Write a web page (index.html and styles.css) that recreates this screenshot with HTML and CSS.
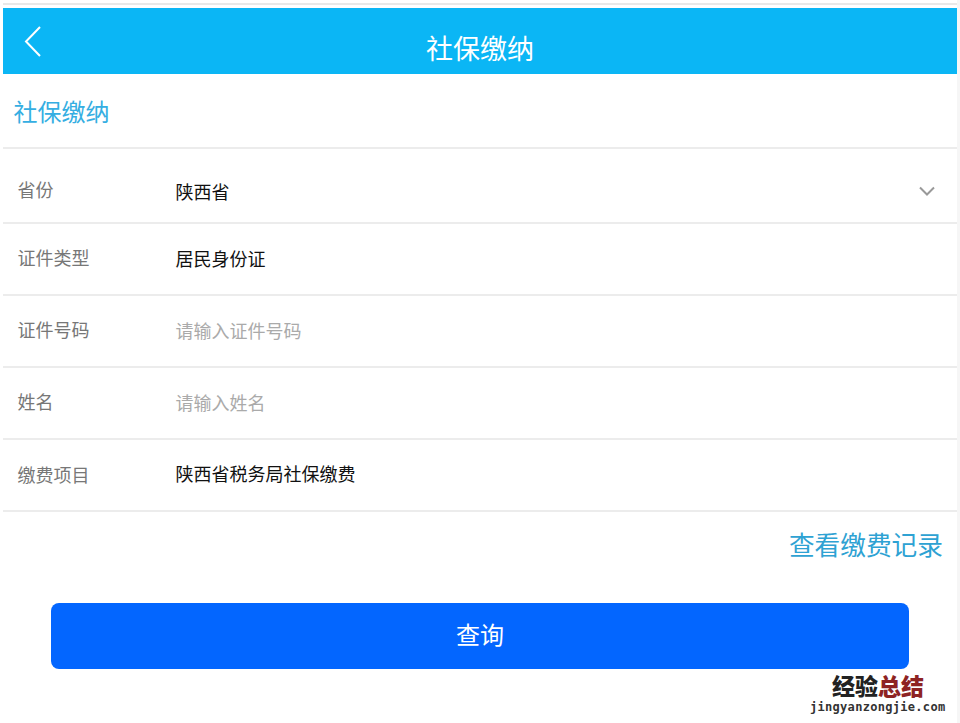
FILE: index.html
```html
<!DOCTYPE html>
<html lang="zh-CN">
<head>
<meta charset="utf-8">
<title>社保缴纳</title>
<link rel="stylesheet" href="styles.css">
</head>
<body>
<div class="page">
  <div class="topline"></div>
  <header class="header">
    <svg class="back" width="18" height="32" viewBox="0 0 18 32"><path d="M16 2 L2 16.5 L16 31" fill="none" stroke="#fff" stroke-width="2"/></svg>
    <h1 class="header-title">社保缴纳</h1>
  </header>
  <h2 class="section">社保缴纳</h2>
  <div class="form">
    <div class="row row-first">
      <span class="label label-up">省份</span>
      <span class="value">陕西省</span>
      <svg class="chev" width="16" height="10" viewBox="0 0 16 10"><path d="M1 1.5 L8 8.5 L15 1.5" fill="none" stroke="#999" stroke-width="2"/></svg>
    </div>
    <div class="row"><span class="label">证件类型</span><span class="value">居民身份证</span></div>
    <div class="row"><span class="label">证件号码</span><span class="value hint">请输入证件号码</span></div>
    <div class="row"><span class="label">姓名</span><span class="value hint">请输入姓名</span></div>
    <div class="row"><span class="label label-down">缴费项目</span><span class="value value-up">陕西省税务局社保缴费</span></div>
  </div>
  <div class="record"><a class="record-link">查看缴费记录</a></div>
  <div class="action"><button class="query">查询</button></div>
</div>
<div class="mark">
  <div class="mark-cn">经验<span class="mark-red">总结</span></div>
  <div class="mark-en">jingyanzongjie.com</div>
</div>
</body>
</html>
```

FILE: styles.css
```css
* { box-sizing: border-box; }
html, body { margin: 0; padding: 0; background: #fff; }
body {
  width: 960px;
  height: 723px;
  overflow: hidden;
  position: relative;
  font-family: "Noto Sans CJK SC", "Liberation Sans", sans-serif;
}
.page {
  width: 957px;
  height: 723px;
  padding-top: 3px;
  padding-left: 3px;
  box-shadow: 3px 0 0 #f6f6f6;
}
.topline { height: 2px; background: #e8e8e8; margin-bottom: 3px; }
.header {
  height: 66px;
  background: #0bb6f5;
  position: relative;
  display: flex;
  justify-content: center;
  align-items: center;
}
.back { position: absolute; left: 21px; top: 17px; }
.header-title {
  margin: 14px 0 0;
  font-size: 27px;
  font-weight: 400;
  color: #fff;
  line-height: 36px;
}
.section {
  margin: 0;
  height: 75px;
  padding: 0 0 1px 10.5px;
  display: flex;
  align-items: center;
  font-size: 24px;
  font-weight: 400;
  color: #35aee2;
  border-bottom: 2px solid #ececec;
}
.row {
  height: 72px;
  display: flex;
  align-items: center;
  border-bottom: 2px solid #ececec;
  padding-left: 14.5px;
  font-size: 18px;
  position: relative;
}
.row-first { height: 75px; padding-top: 10px; }
.label { width: 158px; color: #777; margin-top: -4px; }
.label-down { margin-top: -2px; }
.value { color: #111; margin-top: -3px; }
.row-first .value { margin-top: 1px; }
.value-up { margin-top: -5px; }
.hint { color: #aaa; }
.chev { position: absolute; right: 22px; top: 37px; }
.record {
  display: flex;
  justify-content: flex-end;
  padding: 11px 14px 0 0;
  height: 91px;
}
.record-link { font-size: 25.7px; line-height: 42px; color: #2ea2d3; }
.action { display: flex; justify-content: center; }
.query {
  width: 858px;
  height: 66px;
  padding: 0 0 6px;
  border: 0;
  border-radius: 8px;
  background: #0366ff;
  color: #fff;
  font-family: inherit;
  font-size: 24px;
}
.mark {
  position: absolute;
  left: 810px;
  top: 671px;
  width: 145px;
}
.mark-cn { font-size: 23px; font-weight: 900; line-height: 28px; color: #222; padding-left: 22px; }
.mark-red { color: #8e2323; }
.mark-en { font-family: "DejaVu Sans Mono", monospace; font-size: 12px; font-weight: 700; line-height: 16px; letter-spacing: 0.3px; color: #333; }
```
